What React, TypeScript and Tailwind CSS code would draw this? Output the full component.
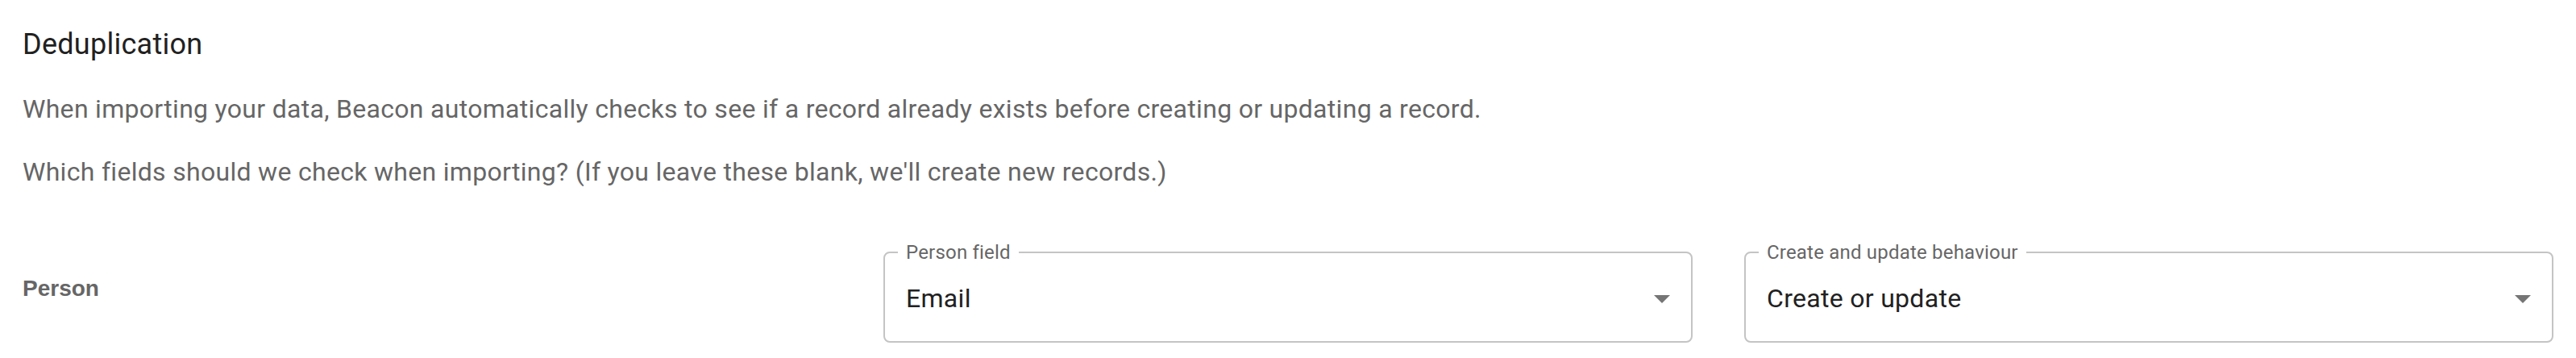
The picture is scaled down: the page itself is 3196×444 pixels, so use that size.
import React from 'react';

type SelectFieldProps = {
  label: string;
  value: string;
};

// outlined select, notch done with a native fieldset + legend
const SelectField = ({ label, value }: SelectFieldProps) => {
  return (
    <fieldset className="h-[124px] rounded-[8px] border-2 border-[#c4c4c4] pl-[16px] pr-[12px]">
      <legend className="px-[10px] text-[24px] leading-[24px] text-[#666666] tracking-[0.2px]">{label}</legend>
      <div className="flex h-[98px] items-center pb-[8px] pl-[10px]">
        <span className="flex-1 text-[32px] leading-[48px] text-[#212121] tracking-[0.3px]">{value}</span>
        <svg viewBox="0 0 24 24" className="h-[48px] w-[48px] fill-[#757575]">
          <path d="M7 10l5 5 5-5z" />
        </svg>
      </div>
    </fieldset>
  );
};

export default function App() {
  return (
    <div className="min-h-screen bg-white px-[28px] pt-[28px] font-['Roboto','Liberation_Sans',sans-serif]">
      <h2 className="text-[36px] leading-[54px] text-[#212121] tracking-[0.27px]">Deduplication</h2>
      <p className="mt-[29px] text-[32px] leading-[48px] text-[#666666] tracking-[0.3px]">
        When importing your data, Beacon automatically checks to see if a record already exists before creating or updating a record.
      </p>
      <p className="mt-[30px] text-[32px] leading-[48px] text-[#666666] tracking-[0.3px]">
        Which fields should we check when importing? (If you leave these blank, we'll create new records.)
      </p>

      {/* Person row */}
      <div className="mt-[64px] grid grid-cols-3 items-start gap-x-[64px]">
        <div className="mt-[36px] font-['Liberation_Sans',Arial,sans-serif] text-[28px] leading-[42px] font-bold text-[#666666]">
          Person
        </div>
        <SelectField label="Person field" value="Email" />
        <SelectField label="Create and update behaviour" value="Create or update" />
      </div>
    </div>
  );
}
